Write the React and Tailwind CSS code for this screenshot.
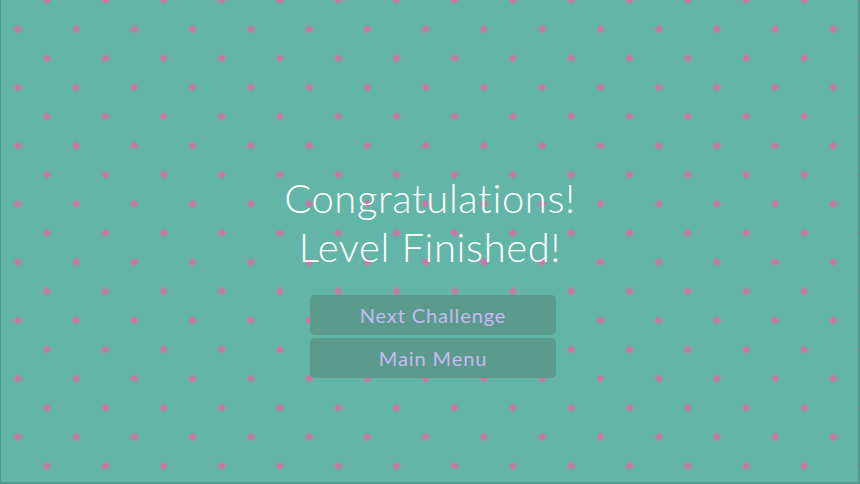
import React from "react";

function DotPattern() {
  const r = 4.5;
  const d = (cx, cy) => `${cx},${cy - r} ${cx + r},${cy} ${cx},${cy + r} ${cx - r},${cy}`;
  return (
    <svg className="absolute inset-0 w-full h-full" width="860" height="484" aria-hidden="true">
      <defs>
        <pattern id="dots" x="-11.125" y="0" width="58.25" height="58.25" patternUnits="userSpaceOnUse">
          <polygon points={d(58.25, 0)} fill="#c77aa6" />
          <polygon points={d(0, 0)} fill="#c77aa6" />
          <polygon points={d(58.25, 58.25)} fill="#c77aa6" />
          <polygon points={d(0, 58.25)} fill="#c77aa6" />
          <polygon points={d(29.125, 29.125)} fill="#c77aa6" />
        </pattern>
      </defs>
      <rect x="0" y="0" width="100%" height="100%" fill="url(#dots)" />
    </svg>
  );
}

export default function App() {
  return (
    <div className="relative w-[860px] h-[484px] overflow-hidden bg-[#63b5a8]">
      <DotPattern />
      <div className="absolute inset-0 border-l border-r-2 border-b-2 border-[#2f6f66]/40 pointer-events-none" />
      <div className="relative flex flex-col items-center pt-[174px]" style={{ fontFamily: "Lato, 'Noto Sans', sans-serif" }}>
        <h1 className="text-white text-[40px] leading-[49px] text-center tracking-[0.6px] font-light">
          Congratulations!
          <br />
          Level Finished!
        </h1>
        <div className="mt-[23px] ml-[6px] flex flex-col gap-[3px]">
          <button className="w-[246px] h-[40px] rounded-[5px] bg-[#5a9b8d] text-[#c6baf2] text-[20px] tracking-[0.9px]">
            Next Challenge
          </button>
          <button className="w-[246px] h-[40px] rounded-[5px] bg-[#5a9b8d] text-[#c6baf2] text-[20px] tracking-[0.9px]">
            Main Menu
          </button>
        </div>
      </div>
    </div>
  );
}
